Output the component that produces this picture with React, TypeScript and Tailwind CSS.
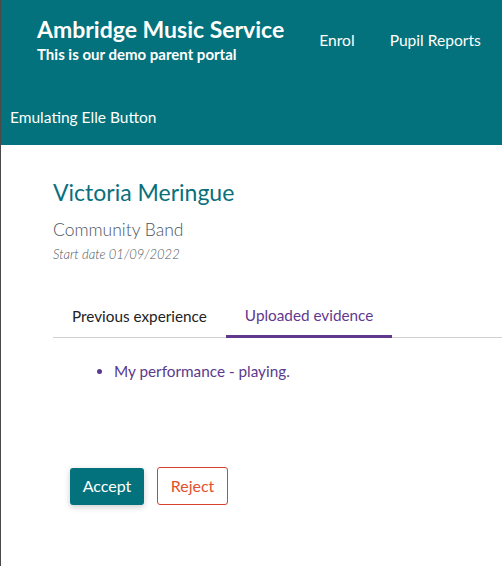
import React from "react";

export default function App() {
  return (
    <div
      className="min-h-[566px] border-l border-[#4a4a4a] bg-white"
      style={{ fontFamily: "Lato, 'Open Sans', sans-serif" }}
    >
      <header className="h-[145px] bg-[#03727c] text-white">
        <div className="flex items-start pl-[36px] pt-[16px]">
          <div className="flex flex-col">
            <div className="text-[23px] font-bold leading-[1.2]">Ambridge Music Service</div>
            <div className="mt-[1px] text-[15px] font-bold leading-[1.2]">This is our demo parent portal</div>
          </div>
          <nav className="ml-[35px] flex gap-[35px] pt-[15px] text-[15.6px] leading-[1.2]">
            <a>Enrol</a>
            <a>Pupil Reports</a>
          </nav>
        </div>
        <div className="pl-[9px] pt-[45px] text-[15.5px] leading-[1.2]">Emulating Elle Button</div>
      </header>

      <main className="pl-[52px] pt-[34px]">
        <h2 className="text-[23px] leading-[1.2] text-[#0a6f7c]">Victoria Meringue</h2>
        <div className="mt-[12px] text-[17.5px] font-light leading-[1.2] text-[#4d5560]">Community Band</div>
        <div className="mt-[7px] text-[13px] font-light italic leading-[1.2] text-[#4d5560]">
          Start date 01/09/2022
        </div>

        <div className="mt-[36px] flex border-b border-[#d0d0d0]">
          <button className="px-[19px] pb-[10px] pt-[8px] text-[15.3px] leading-[1.2] text-[#222]">
            Previous experience
          </button>
          <button className="-mb-px border-b-[3px] border-[#62388f] px-[19px] pb-[10px] pt-[8px] text-[15.3px] leading-[1.2] text-[#62388f]">
            Uploaded evidence
          </button>
        </div>

        <ul className="mt-[24px] list-disc pl-[61px] text-[15.3px] leading-[1.2] text-[#5a3a8e]">
          <li>My performance - playing.</li>
        </ul>

        <div className="ml-[17px] mt-[87px] flex items-end gap-[13px]">
          <button className="h-[37px] w-[74px] rounded-[3px] bg-[#03727c] text-[16px] text-white shadow-[0_2px_6px_rgba(0,0,0,0.2)]">
            Accept
          </button>
          <button className="h-[38px] w-[71px] rounded-[3px] border border-[#d8402f] bg-white text-[16px] text-[#e2512e]">
            Reject
          </button>
        </div>
      </main>
    </div>
  );
}
